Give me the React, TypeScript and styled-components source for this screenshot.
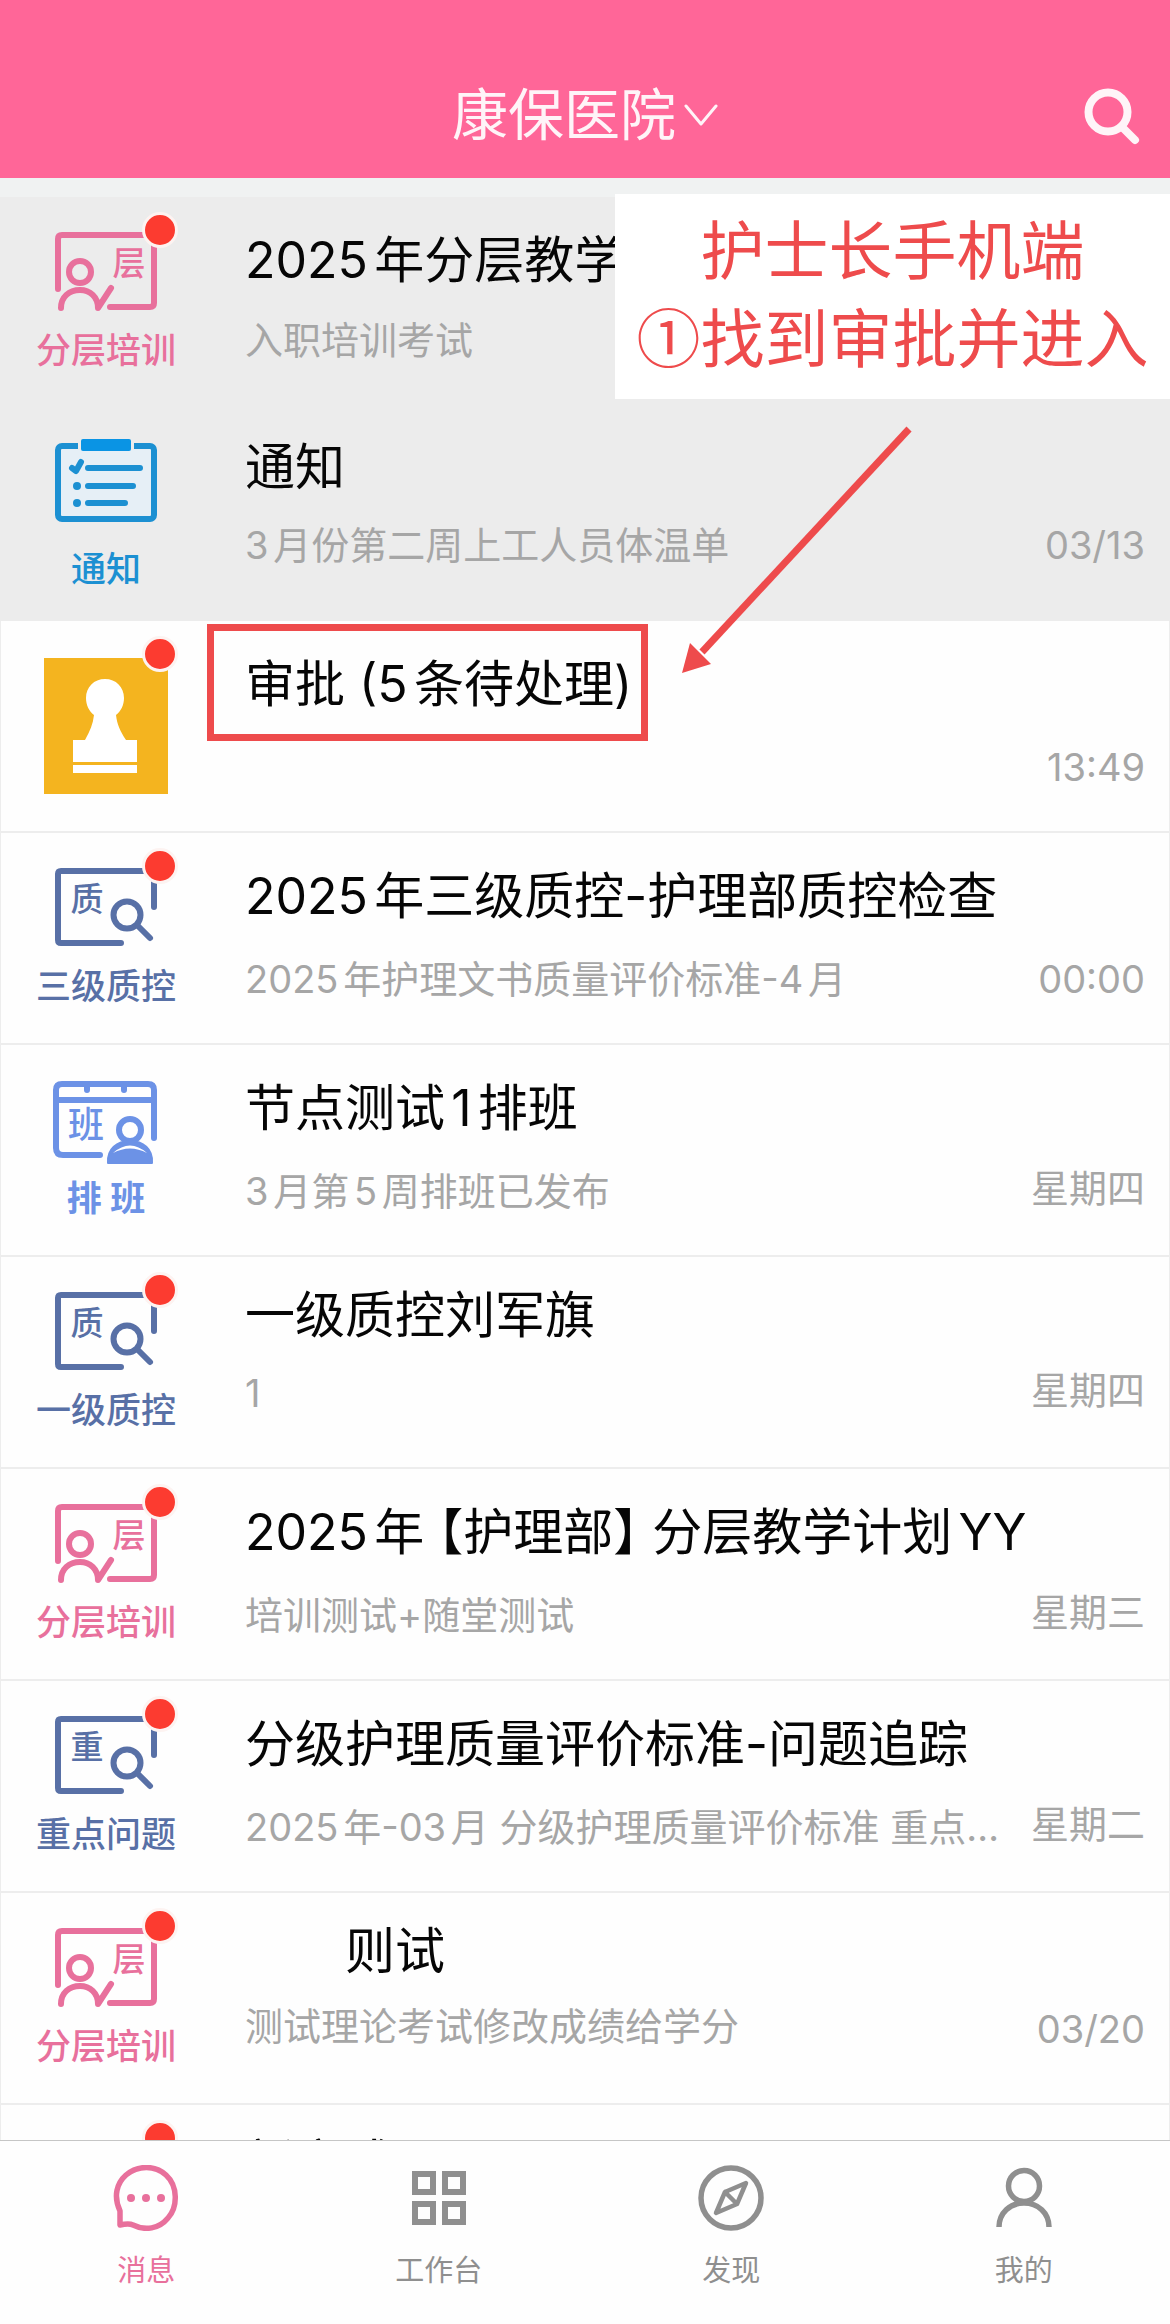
import React from "react";
import styled, { createGlobalStyle } from "styled-components";

const PINK = "#e8709c";
const NAVY = "#5870a6";
const BLUE = "#1c90d2";
const SKY = "#6c92e6";
const MARK = "#ee4b4c";

const GlobalStyle = createGlobalStyle`
  * { box-sizing: border-box; }
  body {
    margin: 0;
    background: #fefefe;
    font-family: Inter, "Noto Sans CJK SC", sans-serif;
    text-autospace: normal;
  }
`;

const Screen = styled.div`
  display: flex;
  flex-direction: column;
  height: 100vh;
  overflow: hidden;
`;

const Header = styled.header`
  display: grid;
  grid-template-columns: 1fr auto 1fr;
  align-items: center;
  height: 178px;
  padding: 52px 28px 0;
  background: #ff6698;
  flex: none;
`;

const PlainButton = styled.button`
  display: flex;
  align-items: center;
  padding: 0;
  border: 0;
  background: none;
  color: #fff4f8;
  font: inherit;
  cursor: pointer;
`;

const HospitalButton = styled(PlainButton)`
  grid-column: 2;
  gap: 8px;
  font-size: 56px;
  line-height: 64px;
`;

const SearchButton = styled(PlainButton)`
  grid-column: 3;
  justify-self: end;
`;

const Content = styled.main`
  position: relative;
  flex: 1;
  min-height: 0;
  overflow: hidden;
  padding-top: 19px;
  background: #f0f2f2;
`;

const List = styled.ul`
  margin: 0;
  padding: 0;
  list-style: none;
`;

const Row = styled.li<{ $pinned?: boolean }>`
  position: relative;
  height: 212px;
  background: ${(p) => (p.$pinned ? "#ececec" : "#fefefe")};
  border: solid ${(p) => (p.$pinned ? "#ececec" : "#ededed")};
  border-width: 0 1px 2px;
`;

const RowLink = styled.a`
  display: grid;
  grid-template-columns: 210px minmax(0, 1fr);
  height: 100%;
  color: inherit;
  text-decoration: none;
`;

const IconCell = styled.div`
  position: relative;
  display: flex;
  flex-direction: column;
  align-items: center;
  padding-top: 30px;
`;

const IconLabel = styled.span<{ $color: string; $low?: boolean; $bold?: boolean }>`
  margin-top: ${(p) => (p.$low ? 20 : 13)}px;
  color: ${(p) => p.$color};
  font-size: 35px;
  font-weight: ${(p) => (p.$bold ? 700 : 500)};
  line-height: 40px;
  white-space: nowrap;
`;

const Dot = styled.span`
  position: absolute;
  top: 15px;
  left: 141px;
  width: 36px;
  height: 36px;
  border: 3px solid #fdf3f1;
  border-radius: 50%;
  background: #fc3b30;
`;

const Body = styled.div`
  display: flex;
  flex-direction: column;
  gap: 21px;
  padding: 28px 24px 0 34px;
`;

const Title = styled.div<{ $tall: boolean; $indent?: boolean }>`
  padding-left: ${(p) => (p.$indent ? 100 : 0)}px;
  overflow: hidden;
  color: #060606;
  font-size: 50px;
  font-feature-settings: "halt";
  line-height: ${(p) => (p.$tall ? 70 : 60)}px;
  text-overflow: ellipsis;
  white-space: nowrap;
`;

const Meta = styled.div`
  display: flex;
  align-items: flex-start;
  gap: 20px;
`;

const Summary = styled.span<{ $tall: boolean }>`
  flex: 1;
  min-width: 0;
  overflow: hidden;
  color: #a6a6a6;
  font-size: 38px;
  line-height: ${(p) => (p.$tall ? 54 : 48)}px;
  text-overflow: ellipsis;
  white-space: nowrap;
`;

const Time = styled.time<{ $tall: boolean }>`
  color: #a6a6a6;
  font-size: 38px;
  line-height: ${(p) => (p.$tall ? 54 : 48)}px;
`;

const Frame = styled.span`
  position: absolute;
  top: 3px;
  left: 206px;
  width: 441px;
  height: 117px;
  border: 7px solid ${MARK};
`;

const Callout = styled.aside`
  position: absolute;
  top: 16px;
  right: 0;
  width: 555px;
  padding: 8px 0 21px;
  background: #fff;
  color: ${MARK};
  font-family: "Noto Sans CJK SC", sans-serif;
  font-size: 64px;
  line-height: 88px;
  text-align: center;
  white-space: nowrap;
`;

const Arrow = styled.svg`
  position: absolute;
  top: 246px;
  right: 250px;
`;

const TabBar = styled.nav`
  display: grid;
  grid-template-columns: repeat(4, 1fr);
  height: 184px;
  flex: none;
  border-top: 1px solid #c6c6c6;
  background: #fefefe;
`;

const Tab = styled.a<{ $active?: boolean }>`
  display: flex;
  flex-direction: column;
  align-items: center;
  gap: 20px;
  padding-top: 24px;
  color: ${(p) => (p.$active ? PINK : "#8f8f8f")};
  font-size: 29px;
  line-height: 40px;
  text-decoration: none;
`;

const Art = styled.svg`
  display: block;
  flex: none;
  fill: none;
  stroke: currentColor;
  stroke-linecap: round;
  stroke-linejoin: round;
`;

const Glyph = styled.text`
  fill: currentColor;
  stroke: none;
  font-weight: 500;
  text-anchor: middle;
`;

function TrainingArt() {
  return (
    <Art width="110" height="90" viewBox="0 0 110 90" strokeWidth="6" color={PINK} aria-hidden="true">
      <path d="M7 62V12Q7 8 11 8H99Q103 8 103 12V76Q103 80 99 80H59" />
      <circle cx="29" cy="45" r="11" />
      <path d="M10 81C10 70 18 63 29 63C39 63 47 70 47 81L60 61" />
      <Glyph x="78" y="48" fontSize="33">层</Glyph>
    </Art>
  );
}

function InspectArt({ char }: { char: string }) {
  return (
    <Art width="110" height="90" viewBox="0 0 110 90" strokeWidth="6" color={NAVY} aria-hidden="true">
      <path d="M70 80H10Q7 80 7 77V11Q7 8 10 8H103V44" />
      <circle cx="76" cy="52" r="13.5" />
      <path d="M87 63L99 75" />
      <Glyph x="36" y="48" fontSize="33">{char}</Glyph>
    </Art>
  );
}

function NoticeArt() {
  return (
    <Art width="110" height="90" viewBox="0 0 110 90" strokeWidth="6" color={BLUE} aria-hidden="true">
      <rect x="7" y="7" width="96" height="73" rx="4" fill="#e6eff6" />
      <path d="M27 7H83" stroke="#ececec" strokeWidth="8" strokeLinecap="butt" />
      <rect x="30" y="0" width="50" height="12" rx="2" fill="#0a94e4" stroke="none" />
      <path d="M21 29L25 32L30 23M37 29H89M37 47H82M37 64H74" />
      <circle cx="26" cy="47" r="4" fill="currentColor" stroke="none" />
      <circle cx="26" cy="64" r="4" fill="currentColor" stroke="none" />
    </Art>
  );
}

function ShiftArt() {
  return (
    <Art width="110" height="90" viewBox="0 0 110 90" strokeWidth="6" color={SKY} aria-hidden="true">
      <path d="M49 80H12Q5 80 5 73V15Q5 9 11 9H97Q103 9 103 15V63M5 25H103M36 9V15M73 9V15" />
      <circle cx="79" cy="55" r="11" />
      <path d="M57 88C56 74 66 66 79 66C92 66 102 74 101 88Z" fill="currentColor" strokeWidth="2" />
      <path d="M62 78Q79 63 96 78Q79 69 62 78Z" fill="#fff" stroke="none" />
      <Glyph x="35" y="63" fontSize="36">班</Glyph>
    </Art>
  );
}

function StampArt() {
  return (
    <Art width="124" height="143" viewBox="0 0 124 143" aria-hidden="true">
      <rect y="7" width="124" height="136" fill="#f4b41f" stroke="none" />
      <path
        d="M29 111V89H41C46 80 49 73 50 64C45 60 42 54 42 47C42 36 50 28 61 28S80 36 80 47C80 54 77 60 72 64C73 73 76 80 82 89H93V111Z"
        fill="#fff"
        stroke="none"
      />
      <rect x="29" y="114" width="64" height="8" fill="#fff" stroke="none" />
    </Art>
  );
}

type Kind = "training" | "notice" | "stamp" | "inspect" | "shift";

type Message = {
  kind?: Kind;
  char?: string;
  label?: string;
  title: string;
  summary: string;
  time: string;
  unread?: boolean;
  pinned?: boolean;
  framed?: boolean;
  indent?: boolean;
};

const messages: Message[] = [
  { kind: "training", label: "分层培训", title: "2025年分层教学", summary: "入职培训考试", time: "", unread: true, pinned: true },
  { kind: "notice", label: "通知", title: "通知", summary: "3月份第二周上工人员体温单", time: "03/13", pinned: true },
  { kind: "stamp", title: "审批 (5条待处理)", summary: "", time: "13:49", unread: true, framed: true },
  { kind: "inspect", char: "质", label: "三级质控", title: "2025年三级质控-护理部质控检查", summary: "2025年护理文书质量评价标准-4月", time: "00:00", unread: true },
  { kind: "shift", label: "排 班", title: "节点测试1排班", summary: "3月第5周排班已发布", time: "星期四" },
  { kind: "inspect", char: "质", label: "一级质控", title: "一级质控刘军旗", summary: "1", time: "星期四", unread: true },
  { kind: "training", label: "分层培训", title: "2025年 【护理部】 分层教学计划YY", summary: "培训测试+随堂测试", time: "星期三", unread: true },
  { kind: "inspect", char: "重", label: "重点问题", title: "分级护理质量评价标准-问题追踪", summary: "2025年-03月 分级护理质量评价标准 重点问题", time: "星期二", unread: true },
  { kind: "training", label: "分层培训", title: "则试", summary: "测试理论考试修改成绩给学分", time: "03/20", unread: true, indent: true },
  { title: "新京成", summary: "", time: "", unread: true },
];

const labelColor: Record<Kind, string> = {
  training: PINK,
  notice: BLUE,
  stamp: "#f4b41f",
  inspect: NAVY,
  shift: SKY,
};

// Lines that hold Latin letters, digits or signs get the taller line box.
const isTall = (s: string) => /[\x21-\x7e]/.test(s);

function RowArt({ kind, char = "" }: { kind: Kind; char?: string }) {
  switch (kind) {
    case "training":
      return <TrainingArt />;
    case "notice":
      return <NoticeArt />;
    case "stamp":
      return <StampArt />;
    case "shift":
      return <ShiftArt />;
    default:
      return <InspectArt char={char} />;
  }
}

function MessageRow({ m }: { m: Message }) {
  return (
    <Row $pinned={m.pinned}>
      <RowLink href="#">
        <IconCell>
          {m.kind && <RowArt kind={m.kind} char={m.char} />}
          {m.kind && m.label && (
            <IconLabel $color={labelColor[m.kind]} $low={m.kind === "notice"} $bold={m.kind === "shift"}>
              {m.label}
            </IconLabel>
          )}
          {m.unread && <Dot />}
        </IconCell>
        <Body>
          <Title $tall={isTall(m.title)} $indent={m.indent}>
            {m.title}
          </Title>
          <Meta>
            <Summary $tall={isTall(m.summary)}>{m.summary}</Summary>
            {m.time && <Time $tall={isTall(m.time)}>{m.time}</Time>}
          </Meta>
        </Body>
      </RowLink>
      {m.framed && <Frame />}
    </Row>
  );
}

export default function App() {
  return (
    <Screen>
      <GlobalStyle />
      <Header>
        <HospitalButton type="button">
          康保医院
          <Art width="34" height="22" viewBox="0 0 34 22" strokeWidth="3" aria-hidden="true">
            <path d="M2 2L17 20L32 2" />
          </Art>
        </HospitalButton>
        <SearchButton type="button" aria-label="搜索">
          <Art width="60" height="60" viewBox="0 0 60 60" strokeWidth="8" aria-hidden="true">
            <circle cx="26" cy="27" r="19.5" />
            <path d="M41 43L53 55" />
          </Art>
        </SearchButton>
      </Header>
      <Content>
        <List>
          {messages.map((m, i) => (
            <MessageRow key={i} m={m} />
          ))}
        </List>
        <Callout>
          护士长手机端
          <br />
          ①找到审批并进入
        </Callout>
        <Arrow width="240" height="254" viewBox="0 0 240 254" aria-hidden="true">
          <path d="M229 5L22 228" stroke={MARK} strokeWidth="7" />
          <path d="M2 249L10 219L31 240Z" fill={MARK} />
        </Arrow>
      </Content>
      <TabBar>
        <Tab href="#" $active>
          <Art width="66" height="66" viewBox="0 0 66 66" strokeWidth="5.5" aria-hidden="true">
            <path d="M7 46C0 31 4 18 13 10C25 0 42 0 53 10C65 21 65 42 55 53C46 64 32 66 20 60Q16 58 7 60Z" />
            <g fill="currentColor" stroke="none">
              <circle cx="18" cy="33" r="4" />
              <circle cx="33" cy="33" r="4" />
              <circle cx="48" cy="33" r="4" />
            </g>
          </Art>
          消息
        </Tab>
        <Tab href="#">
          <Art width="66" height="66" viewBox="0 0 66 66" strokeWidth="6" aria-hidden="true">
            <path
              strokeLinejoin="miter"
              d="M9 9H27V27H9ZM39 9H57V27H39ZM9 39H27V57H9ZM39 39H57V57H39Z"
            />
          </Art>
          工作台
        </Tab>
        <Tab href="#">
          <Art width="66" height="66" viewBox="0 0 66 66" strokeWidth="5.5" aria-hidden="true">
            <circle cx="33" cy="33" r="30" />
            <path d="M48 18L27 27L18 48L39 39ZM27 27L39 39" strokeWidth="4.5" />
          </Art>
          发现
        </Tab>
        <Tab href="#">
          <Art width="66" height="66" viewBox="0 0 66 66" strokeWidth="5.5" aria-hidden="true">
            <circle cx="33" cy="21" r="15.5" />
            <path d="M8 62C8 48 19 38 33 38S58 48 58 62" strokeLinecap="butt" />
          </Art>
          我的
        </Tab>
      </TabBar>
    </Screen>
  );
}
